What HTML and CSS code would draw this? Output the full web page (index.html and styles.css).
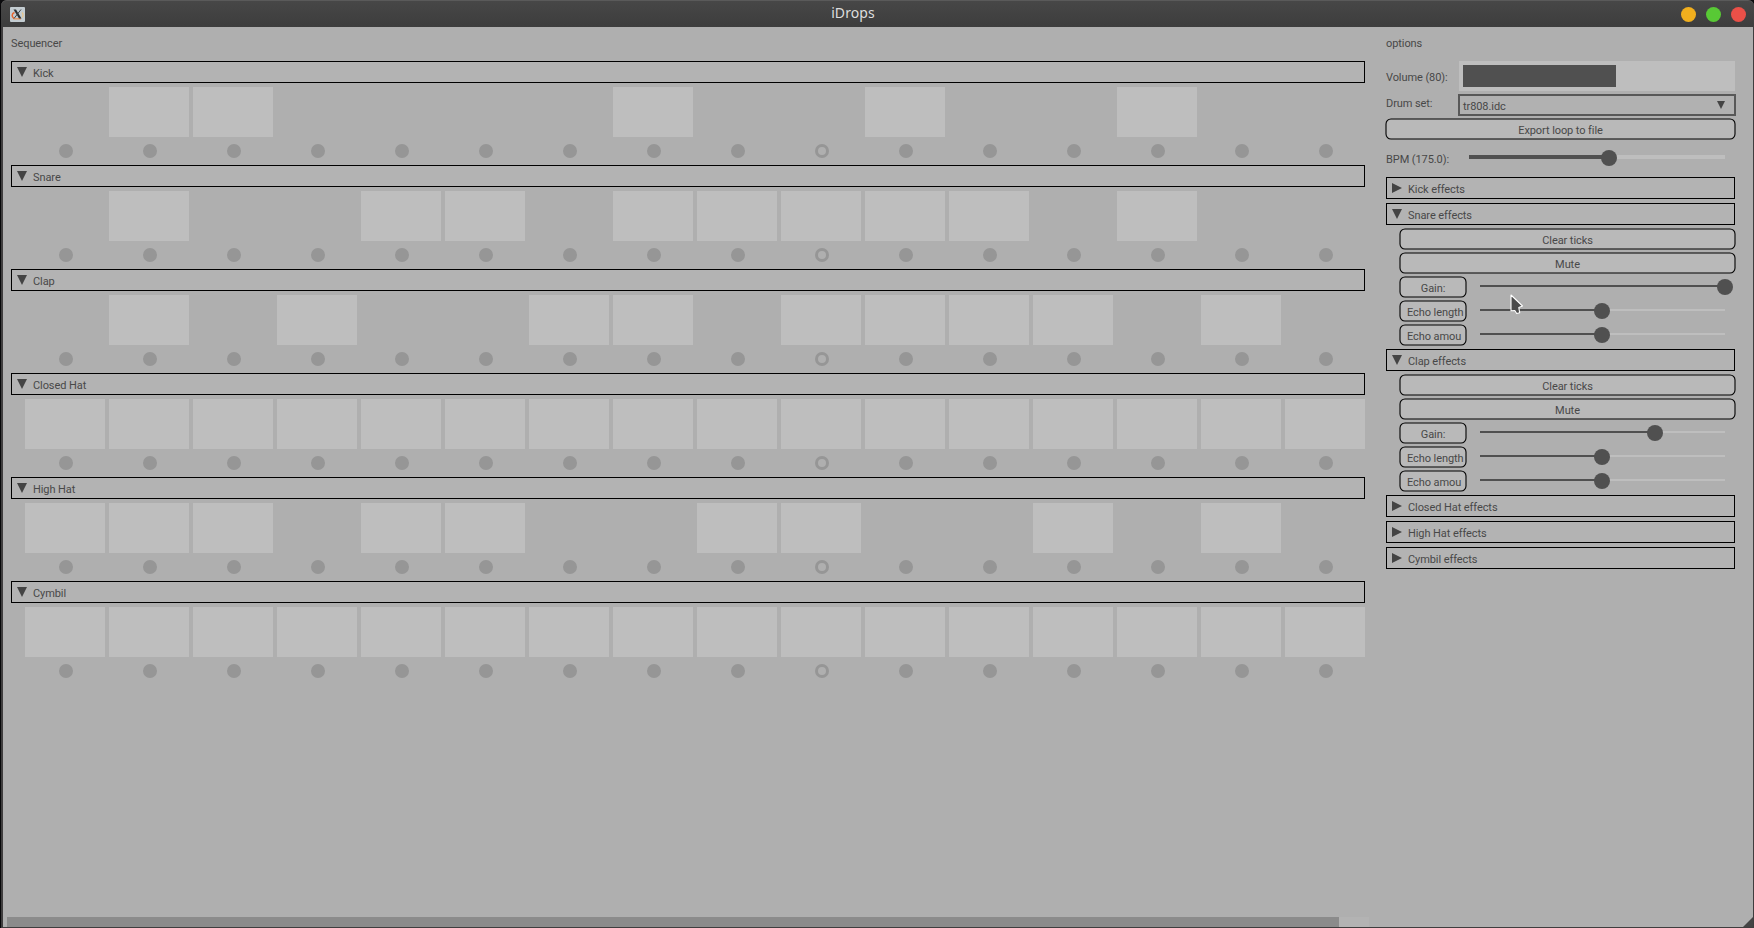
FILE: index.html
```html
<!DOCTYPE html>
<html lang="en">
<head>
<meta charset="utf-8">
<title>iDrops</title>
<link rel="stylesheet" href="styles.css">
</head>
<body>
<div class="window">
  <header class="titlebar">
    <svg class="app-icon" width="15" height="15" viewBox="0 0 15 15">
      <rect width="15" height="15" rx="1" fill="#c3ccd1"/>
      <path d="M4.500 5.500C1.500 6.500 1.500 10 4 11.500" fill="none" stroke="#e8642c" stroke-width="1.500"/>
      <path d="M3.500 11.800H11" stroke="#e8955c" stroke-width="1.300"/>
      <path d="M12 5.500C13.500 7 13.300 9 12.300 10.500" fill="none" stroke="#e9c58c" stroke-width="1.200"/>
      <path d="M3.500 2.500H6L11.500 11.500H9Z" fill="#2b2f31"/>
      <path d="M11 2.500L4 11.500" stroke="#3c4144" stroke-width="1"/>
    </svg>
    <h1 class="title">iDrops</h1>
    <div class="controls">
      <span class="control minimize"></span>
      <span class="control maximize"></span>
      <span class="control close"></span>
    </div>
  </header>
  <main class="content">
    <section class="sequencer">
      <div class="group-label">Sequencer</div>
      <div class="tracks" id="tracks"></div>
      <div class="scrollbar"><div class="thumb"></div></div>
    </section>
    <section class="options">
      <div class="group-label">options</div>
      <div class="row volume"><span class="label">Volume (80):</span><div class="progress"><div class="progress-fill"></div></div></div>
      <div class="row drumset"><span class="label">Drum set:</span><div class="combo"><span>tr808.idc</span><svg width="8" height="8" viewBox="0 0 8 8"><path d="M0 0H8L4 8Z" fill="#444"/></svg></div></div>
      <div class="button"><svg class="frame"><rect x="1" y="1" width="349" height="20" rx="5"/></svg><span>Export loop to file</span></div>
      <div class="row bpm"><span class="label">BPM (175.0):</span><div class="slider thick"><div class="fill" style="width:140px"></div><div class="knob"></div></div></div>
      <div class="effects" id="effects"></div>
    </section>
    <svg class="resize" width="10" height="10" viewBox="0 0 10 10"><path d="M10 0V10H0Z" fill="#444"/></svg>
  </main>
  <svg class="cursor" width="14" height="22" viewBox="0 0 14 22"><path d="M1 1L12.500 12L8.800 13.500L9.700 18.800L6.700 19.500L4.800 16.500L1 16.800Z" fill="#4b4b4b" stroke="#fff" stroke-width="1.100" stroke-linejoin="round"/></svg>
</div>
<script src="app.js"></script>
</body>
</html>
```

FILE: styles.css
```css
* { box-sizing: border-box; }
body {
  margin: 0;
  background: #0b0b0d;
  font: 11px/14px Roboto, sans-serif;
  letter-spacing: -0.08px;
  color: #484848;
  overflow: hidden;
}
.window {
  width: 1754px;
  height: 928px;
  padding: 0 1px 1px 2px;
  border-left: 1px solid #070709;
  background: #3f3d3e;
  border-radius: 6px 6px 0 0;
}
.titlebar {
  height: 27px;
  margin: 0 -1px 0 -2px;
  padding: 0 8px 0 9px;
  display: grid;
  grid-template-columns: 50px 1fr 100px;
  align-items: center;
  background: linear-gradient(#474747, #3d3d3d);
  border-top: 1px solid #5a5a5a;
  border-radius: 6px 6px 0 0;
}
.app-icon { margin-top: 1px; }
.title {
  margin: 0 0 3px;
  font: 14px/20px "Noto Sans", sans-serif;
  letter-spacing: 0.1px;
  color: #dedede;
  text-align: center;
}
.controls { display: flex; gap: 10px; justify-content: flex-end; padding-top: 1px; }
.control { width: 15px; height: 15px; border-radius: 50%; }
.minimize { background: #f1af1e; }
.maximize { background: #58c935; }
.close { background: #ea5048; }

.content {
  position: relative;
  height: 900px;
  display: flex;
  background: #afafaf;
}
.sequencer { width: 1366px; display: flex; flex-direction: column; }
.group-label { height: 34px; padding: 10px 0 0 8px; }
.tracks { flex: 1; padding: 0 4px 0 8px; }
.track { height: 104px; }
.head {
  height: 22px;
  display: flex;
  align-items: center;
  gap: 6px;
  padding: 3px 0 0 5px;
  border: 1px solid #000;
  background: #b3b3b3;
}
.head svg { margin-top: -3px; flex: none; }
.head span { margin-top: 1px; }
.cells, .ticks { display: grid; grid-template-columns: repeat(16, 80px); gap: 4px; margin-left: 14px; }
.cells { margin-top: 4px; }
.cell { height: 50px; }
.cell.on { background: #bebebe; }
.ticks { margin-top: 7px; }
.tick { width: 14px; height: 14px; margin-left: 34px; border-radius: 50%; background: #969696; }
.tick.current { background: none; border: 3px solid #969696; }
.scrollbar { height: 10px; margin-left: 4px; background: #b3b3b3; }
.thumb { width: 1332px; height: 10px; background: #8b8b8b; }

.options { width: 367px; padding-left: 16px; }
.options .group-label { padding-left: 1px; }
.row { display: flex; }
.label { width: 74px; padding-left: 1px; white-space: nowrap; }
.volume .label { padding-top: 10px; }
.progress { width: 276px; height: 30px; padding: 4px; background: #bebebe; }
.progress-fill { width: 153px; height: 22px; background: #505050; }
.drumset { margin-top: 3px; }
.drumset .label { width: 73px; padding-top: 3px; }
.combo {
  width: 278px;
  height: 22px;
  display: flex;
  align-items: center;
  justify-content: space-between;
  padding: 3px 9px 0 3px;
  border: 2px solid #585858;
  background: #b1b1b1;
}
.combo span { margin-top: 1px; }
.combo svg { margin-top: -3px; }
.button {
  position: relative;
  width: 351px;
  height: 22px;
  margin-top: 2px;
  padding-top: 6px;
  text-align: center;
  white-space: nowrap;
}
.button span { position: relative; }
.frame { position: absolute; left: 0; top: 0; width: 100%; height: 100%; }
.frame rect { fill: #b9b9b9; stroke: #000; stroke-width: 1.1px; }
.bpm { margin-top: 10px; height: 27px; }
.bpm .label { width: 84px; padding-top: 3px; }
.slider { position: relative; width: 245px; height: 2px; background: #bebebe; }
.slider.thick { width: 256px; height: 4px; margin-top: 5px; }
.fill { height: 100%; background: #505050; }
.knob { position: absolute; top: -6px; left: 132px; width: 16px; height: 16px; border-radius: 50%; background: #505050; }
.thick .knob { top: -5px; }
.effect { margin: 0 0 4px 1px; width: 349px; }
.effect-body { margin: 0 0 -1px 13px; padding-top: 1px; }
.effect-body .button { width: 337px; }
.effect-row { display: flex; align-items: flex-start; }
.effect-row .button { width: 68px; }
.effect-row .slider { margin: 11px 0 0 13px; }
.effect-row .clipped { padding-left: 8px; text-align: left; }

.resize { position: absolute; right: 0; bottom: 0; }
.cursor { position: absolute; left: 1510px; top: 294px; }
```

FILE: app.js
```js
const DOWN = '<svg width="10" height="10" viewBox="0 0 10 10"><path d="M0 0H10L5 10Z" fill="#444"/></svg>';
const RIGHT = '<svg width="10" height="10" viewBox="0 0 10 10"><path d="M0 0L10 5L0 10Z" fill="#444"/></svg>';
const CURRENT_TICK = 9;

const tracks = [
  ['Kick', '0110000100100100'],
  ['Snare', '0100110111110100'],
  ['Clap', '0101001101111010'],
  ['Closed Hat', '1111111111111111'],
  ['High Hat', '1110110011001010'],
  ['Cymbil', '1111111111111111']
];

const head = (icon, text) => `<div class="head">${icon}<span>${text}</span></div>`;

const button = (text, width, cls = '') => `
  <div class="button${cls}"><svg class="frame"><rect x="1" y="1" width="${width - 2}" height="20" rx="5"/></svg><span>${text}</span></div>`;

document.getElementById('tracks').innerHTML = tracks.map(([name, steps]) => `
  <div class="track">
    ${head(DOWN, name)}
    <div class="cells">${[...steps].map(s => `<div class="cell${s === '1' ? ' on' : ''}"></div>`).join('')}</div>
    <div class="ticks">${[...steps].map((s, i) => `<div class="tick${i === CURRENT_TICK ? ' current' : ''}"></div>`).join('')}</div>
  </div>`).join('');

// Slider values are knob centres, in pixels along the 245px track.
const effects = [
  ['Kick'],
  ['Snare', [245, 122, 122]],
  ['Clap', [175, 122, 122]],
  ['Closed Hat'],
  ['High Hat'],
  ['Cymbil']
];
const params = [['Gain:', ''], ['Echo length', ' clipped'], ['Echo amou', ' clipped']];

const effectBody = values => `
  <div class="effect-body">
    ${button('Clear ticks', 337)}
    ${button('Mute', 337)}
    ${params.map(([text, cls], i) => `
      <div class="effect-row">
        ${button(text, 68, cls)}
        <div class="slider">
          <div class="fill" style="width:${values[i]}px"></div>
          <div class="knob" style="left:${values[i] - 8}px"></div>
        </div>
      </div>`).join('')}
  </div>`;

document.getElementById('effects').innerHTML = effects.map(([name, values]) => `
  <div class="effect">${head(values ? DOWN : RIGHT, name + ' effects')}${values ? effectBody(values) : ''}</div>`).join('');
```
